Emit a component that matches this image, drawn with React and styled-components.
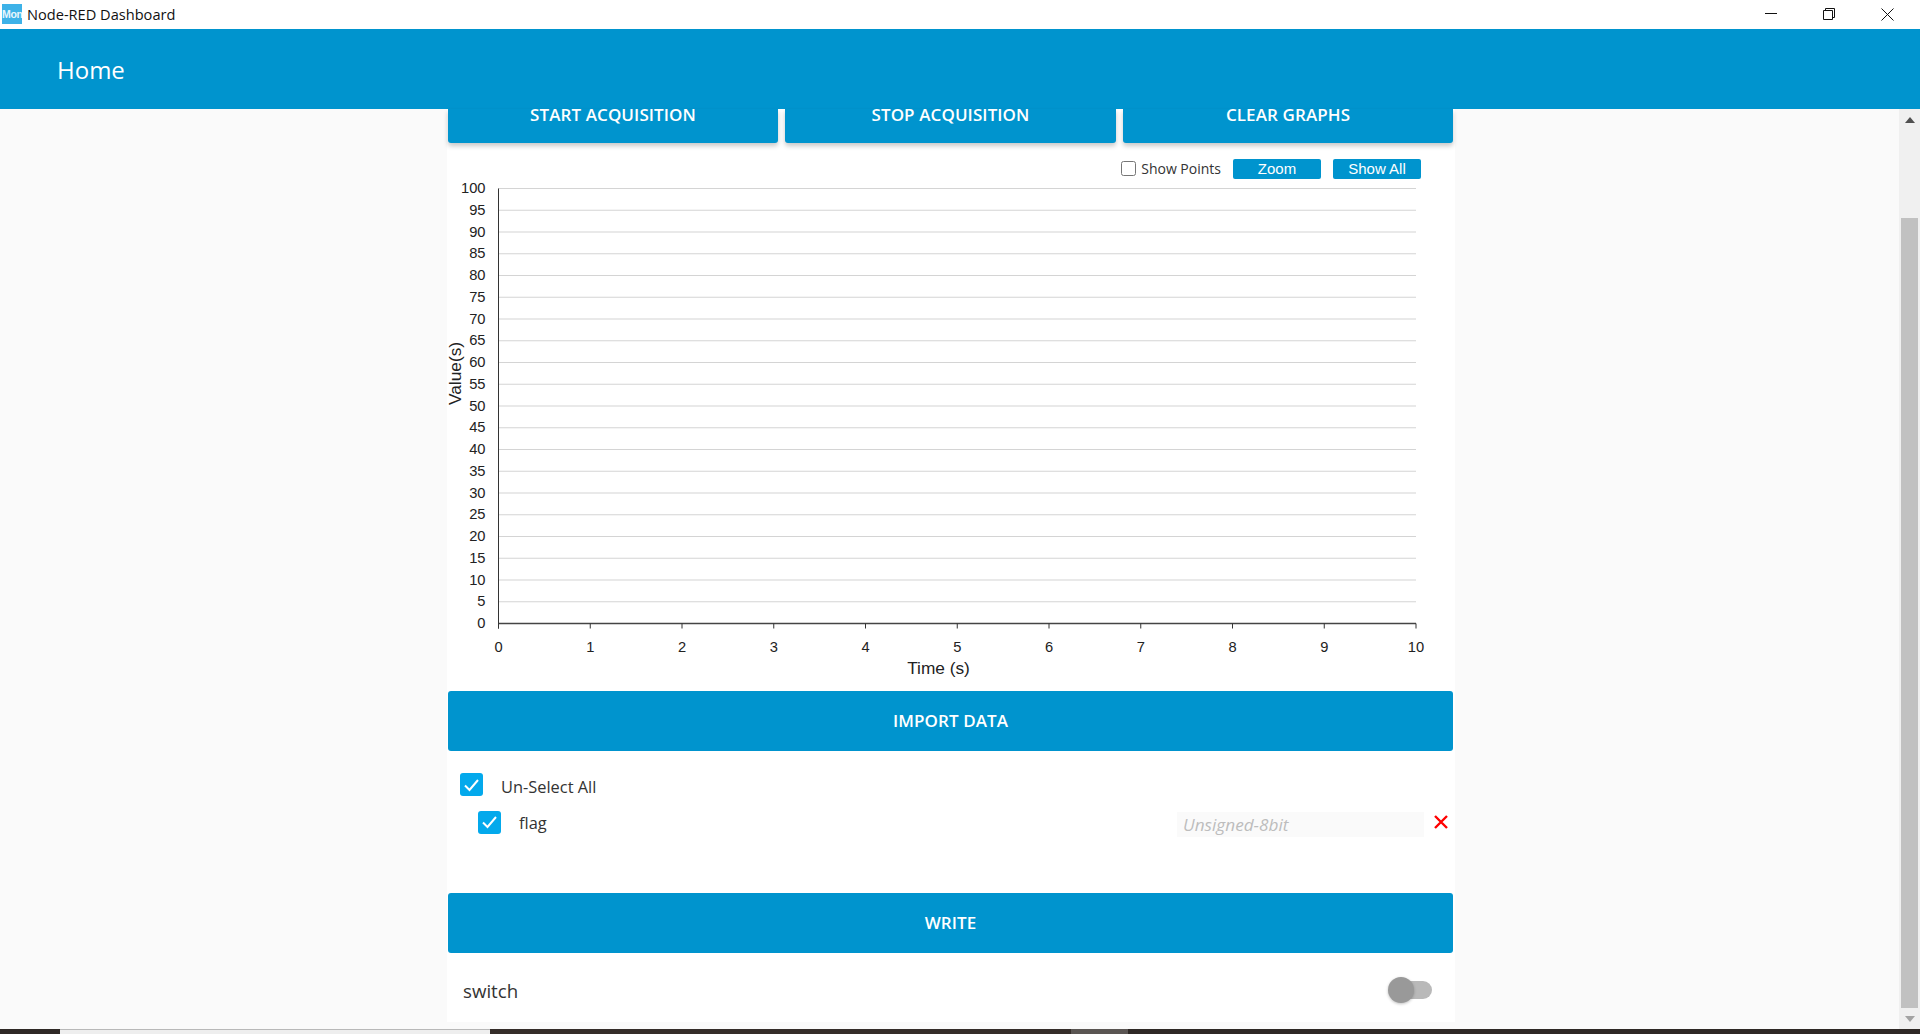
import React from 'react';
import styled, { createGlobalStyle } from 'styled-components';

const Global = createGlobalStyle`
  html, body { margin: 0; padding: 0; height: 100%; overflow: hidden; background: #fafafa; }
  #root { height: 100%; }
`;
const BLUE = '#0094ce';
const Window = styled.div`
  width: 1920px; height: 1034px; display: flex; flex-direction: column;
  font-family: "Open Sans", "Noto Sans", sans-serif; color: #222; overflow: hidden;
`;
const TitleBar = styled.div`
  height: 29px; flex: none; background: #fff; display: flex; align-items: center; padding: 0 3px 1px 2px; box-sizing: border-box;
`;
const AppIcon = styled.div`
  width: 20px; height: 20px; background: #3db2e8; color: #e8f6fd; font: bold 10.5px/20px "Liberation Sans", sans-serif;
  overflow: hidden; text-align: center; letter-spacing: -0.3px; white-space: nowrap;
`;
const TitleText = styled.span`
  font-size: 14.6px; margin-left: 5px; color: #111; line-height: 28px;
`;
const WinControls = styled.div`
  margin-left: auto; display: flex; align-items: center; height: 100%;
`;
const WinButton = styled.div`
  width: 58.5px; height: 28px; display: flex; align-items: center; justify-content: center;
`;
const Header = styled.header`
  height: 80px; flex: none; background: ${BLUE}; display: flex; align-items: center; padding: 1px 0 0 57px;
  color: #fff; font-size: 24px; box-sizing: border-box;
`;
const Body = styled.div`
  flex: 1; display: flex; min-height: 0; background: #fafafa;
`;
const Content = styled.main`
  flex: 1; display: flex; justify-content: flex-start; padding-left: 447px; min-width: 0;
`;
const Card = styled.section`
  width: 1008px; height: 913px; background: #fff; box-sizing: border-box; padding: 0 2px 0 1px;
  display: flex; flex-direction: column;
`;
const TopButtons = styled.div`
  display: grid; grid-template-columns: 330px 331px 330px; column-gap: 7px; flex: none; height: 34px;
`;
const TopButton = styled.button`
  border: 0; padding: 0 0 22px; height: 34px; box-sizing: border-box; background: ${BLUE}; color: #fff;
  font: 600 17px/12px "Open Sans", sans-serif; letter-spacing: 0.1px; border-radius: 0 0 3px 3px;
  box-shadow: 0 3px 5px rgba(0,0,0,.22); text-transform: uppercase;
`;
const ChartBox = styled.div`
  height: 548px; flex: none; display: flex; flex-direction: column;
`;
const ChartTools = styled.div`
  display: flex; align-items: center; justify-content: flex-end; height: 20px; margin-top: 16px; padding-right: 32px;
`;
const PointsLabel = styled.label`
  display: flex; align-items: center; font: 14px "Open Sans", sans-serif; color: #333; margin-right: 12px; padding-bottom: 2px;
`;
const PointsBox = styled.span`
  width: 13px; height: 13px; border: 1px solid #767676; border-radius: 2.5px; margin-right: 5px; background: #fff;
`;
const ToolButton = styled.button`
  width: 88px; height: 20px; border: 0; border-radius: 2px; background: ${BLUE}; color: #fff; padding: 0 0 1px;
  font: 15px "Liberation Sans", sans-serif; margin-left: ${p => p.$gap || 0}px;
`;
const ChartSvg = styled.svg`
  display: block; flex: none; overflow: visible;
  text { font-family: "Liberation Sans", Arial, sans-serif; fill: #222; }
`;
const BarButton = styled.button`
  height: 60px; flex: none; border: 0; border-radius: 3px; background: ${BLUE}; color: #fff; padding: 0 0 1px;
  font: 600 17px "Open Sans", sans-serif; letter-spacing: 0.1px; text-transform: uppercase;
`;
const Options = styled.div`
  height: 142px; flex: none; display: flex; flex-direction: column; padding-top: 15px; box-sizing: border-box;
`;
const OptionRow = styled.div`
  display: flex; align-items: center; height: ${p => p.$h}px; flex: none; padding-left: ${p => p.$indent}px;
`;
const Check = styled.span`
  width: 23px; height: 23px; border-radius: 3px; background: #03a9ec; display: flex; align-items: center;
  justify-content: center; flex: none;
`;
const OptionLabel = styled.span`
  font: 16.4px "Open Sans", sans-serif; color: #333; margin-left: 18px; position: relative; top: ${p => p.$nudge}px;
`;
const TypeInput = styled.div`
  margin-left: auto; width: 247px; height: 25px; background: #fafafa; color: #bdbdbd; font: italic 17.2px "Open Sans", sans-serif;
  line-height: 25px; padding-left: 6px; box-sizing: border-box; position: relative; top: 2px;
`;
const Remove = styled.span`
  width: 14px; height: 14px; margin: 0 5px 0 10px; display: flex;
`;
const SwitchRow = styled.div`
  height: 69px; flex: none; display: flex; align-items: center; padding: 0 21px 0 15px;
`;
const SwitchLabel = styled.span`
  font: 18.7px "Open Sans", sans-serif; color: #333; position: relative; top: 2.5px;
`;
const SwitchTrack = styled.span`
  margin-left: auto; width: 36px; height: 18px; border-radius: 9px; background: #b9b9b9; position: relative; top: 2.5px;
`;
const SwitchThumb = styled.span`
  position: absolute; left: -8px; top: -4px; width: 26px; height: 26px; border-radius: 50%; background: #999;
  box-shadow: 0 1px 3px rgba(0,0,0,.25);
`;
const Scrollbar = styled.aside`
  width: 21px; flex: none; margin-left: auto; background: #f0f0f0; display: flex; flex-direction: column; align-items: center;
  height: 920px;
`;
const ScrollEnd = styled.div`
  height: 21px; flex: none; display: flex; align-items: center; justify-content: center;
`;
const ScrollGap = styled.div`
  height: 88px; flex: none;
`;
const ScrollThumb = styled.div`
  width: 17px; flex: 1; background: #c1c1c1;
`;
const TaskBar = styled.footer`
  height: 5px; flex: none; background: #2e2825; display: flex;
`;
const TaskSeg = styled.div`
  width: ${p => p.$w}px; flex: none; background: ${p => p.$bg};
  border-top: ${p => (p.$line ? '1px solid #b8b8b8' : '0')}; box-sizing: border-box;
`;

const yTicks = Array.from({ length: 21 }, (_, i) => i * 5);
const xTicks = Array.from({ length: 11 }, (_, i) => i);
const X0 = 50.5, XW = 917.5, Y0 = 444.5, YH = 435;

function Chart() {
  return (
    <ChartSvg width="1005" height="512" viewBox="0 0 1005 512">
      {yTicks.map(v => {
        const y = Y0 - (v / 100) * YH;
        return (
          <g key={v}>
            {v > 0 && <line x1={X0} x2={X0 + XW} y1={y} y2={y} stroke="#d4d4d4" strokeWidth="1.2" />}
            <text x={X0 - 13} y={y + 4.5} textAnchor="end" fontSize="14.7">{v}</text>
          </g>
        );
      })}
      <line x1={X0} x2={X0} y1={Y0 - YH} y2={Y0 + 5} stroke="#333" strokeWidth="1" />
      <line x1={X0} x2={X0 + XW} y1={Y0} y2={Y0} stroke="#444" strokeWidth="1.4" />
      {xTicks.map(v => {
        const x = X0 + (v / 10) * XW;
        return (
          <g key={v}>
            <line x1={x} x2={x} y1={Y0} y2={Y0 + 5} stroke="#333" strokeWidth="1" />
            <text x={x} y={Y0 + 28.5} textAnchor="middle" fontSize="14.7">{v}</text>
          </g>
        );
      })}
      <text x="490.5" y={Y0 + 50.5} textAnchor="middle" fontSize="17.3">Time (s)</text>
      <text transform="translate(8 194.5) rotate(-90)" textAnchor="middle" fontSize="17.3" dominantBaseline="middle">Value(s)</text>
    </ChartSvg>
  );
}

const Tick = () => (
  <svg width="17" height="14" viewBox="0 0 17 14"><path d="M2 7.5 L6.5 12 L15 2" fill="none" stroke="#fff" strokeWidth="2" /></svg>
);

export default function App() {
  return (
    <Window>
      <Global />
      <TitleBar>
        <AppIcon>Mon</AppIcon>
        <TitleText>Node-RED Dashboard</TitleText>
        <WinControls>
          <WinButton>
            <svg width="12" height="2"><rect width="12" height="1" fill="#111" /></svg>
          </WinButton>
          <WinButton>
            <svg width="12" height="12" viewBox="0 0 12 12"><path d="M.5 2.5h9v9h-9zM2.5 2.5v-2h9v9h-2" fill="none" stroke="#111" /></svg>
          </WinButton>
          <WinButton>
            <svg width="13" height="13" viewBox="0 0 13 13"><path d="M.5.5l12 12M12.5.5l-12 12" stroke="#111" /></svg>
          </WinButton>
        </WinControls>
      </TitleBar>
      <Header>Home</Header>
      <Body>
        <Content>
          <Card>
            <TopButtons>
              <TopButton>Start Acquisition</TopButton>
              <TopButton>Stop Acquisition</TopButton>
              <TopButton>Clear Graphs</TopButton>
            </TopButtons>
            <ChartBox>
              <ChartTools>
                <PointsLabel><PointsBox />Show Points</PointsLabel>
                <ToolButton>Zoom</ToolButton>
                <ToolButton $gap={12}>Show All</ToolButton>
              </ChartTools>
              <Chart />
            </ChartBox>
            <BarButton>Import Data</BarButton>
            <Options>
              <OptionRow $h={37} $indent={12}>
                <Check><Tick /></Check>
                <OptionLabel $nudge={1.5}>Un-Select All</OptionLabel>
              </OptionRow>
              <OptionRow $h={38} $indent={30}>
                <Check><Tick /></Check>
                <OptionLabel $nudge={0}>flag</OptionLabel>
                <TypeInput>Unsigned-8bit</TypeInput>
                <Remove>
                  <svg width="14" height="14" viewBox="0 0 14 14"><path d="M1 1l12 12M13 1L1 13" stroke="#f00" strokeWidth="2.4" /></svg>
                </Remove>
              </OptionRow>
            </Options>
            <BarButton>Write</BarButton>
            <SwitchRow>
              <SwitchLabel>switch</SwitchLabel>
              <SwitchTrack><SwitchThumb /></SwitchTrack>
            </SwitchRow>
          </Card>
        </Content>
        <Scrollbar>
          <ScrollEnd><svg width="10" height="6"><path d="M5 0l5 6H0z" fill="#505050" /></svg></ScrollEnd>
          <ScrollGap />
          <ScrollThumb />
          <ScrollEnd><svg width="10" height="6"><path d="M5 6l5-6H0z" fill="#a3a3a3" /></svg></ScrollEnd>
        </Scrollbar>
      </Body>
      <TaskBar>
        <TaskSeg $w={60} $bg="#2e2825" />
        <TaskSeg $w={430} $bg="#eeeeee" $line />
        <TaskSeg $w={581} $bg="#352d29" />
        <TaskSeg $w={57} $bg="#5a5552" />
      </TaskBar>
    </Window>
  );
}
